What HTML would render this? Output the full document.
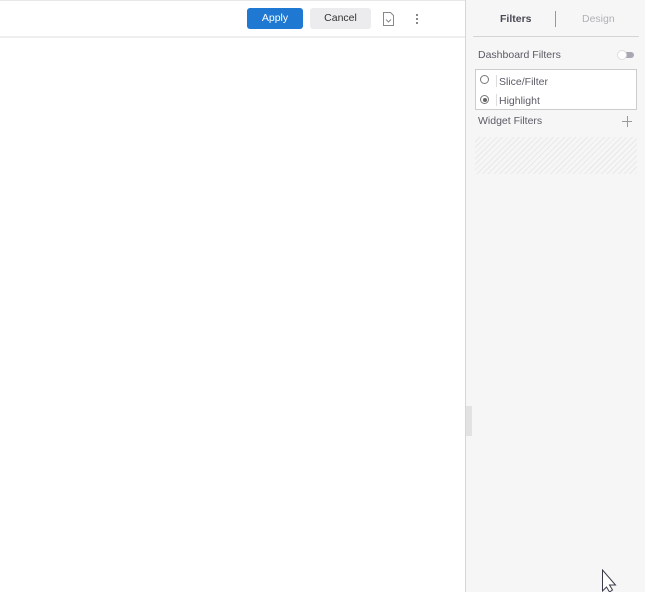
<!DOCTYPE html>
<html><head><style>
*{margin:0;padding:0;box-sizing:border-box}
body{width:645px;height:592px;position:relative;overflow:hidden;background:#fff;font-family:"Liberation Sans",sans-serif;font-size:10px;color:#5b5b66}
.a{position:absolute}
.t{line-height:12px}
.hatch{background:repeating-linear-gradient(135deg,#f6f6f6 0 3px,#e9e9e9 3px 4px)}
</style></head><body>
<div class="a" style="left:0;top:0;width:465px;height:1px;background:#e8e8e8"></div>
<div class="a" style="left:0;top:36px;width:465px;height:2px;background:#efefef"></div>
<div class="a" style="left:247px;top:8px;width:56px;height:21px;background:#1f78d1;border-radius:3px;color:#fff;text-align:center;line-height:21px;font-size:10.5px">Apply</div>
<div class="a" style="left:310px;top:8px;width:61px;height:21px;background:#ececee;border-radius:3px;color:#333;text-align:center;line-height:21px;font-size:10.5px">Cancel</div>
<svg class="a" style="left:382px;top:11px" width="13" height="16" viewBox="0 0 13 16"><path d="M1.5 1.5h7l3 3v10h-10z" fill="none" stroke="#888" stroke-width="1"/><path d="M4 8.5l2.5 2.5 2.5-2.5" fill="none" stroke="#888"/></svg>
<div class="a" style="left:416px;top:14px;width:2px;height:2px;background:#888;box-shadow:0 4px #888,0 8px #888"></div>
<div class="a" style="left:465px;top:0;width:180px;height:592px;background:#f6f6f6;border-left:1px solid #d6d6d6"></div>
<div class="a t" style="left:500px;top:13px;color:#4a4a55;font-weight:bold;font-size:10.5px">Filters</div>
<div class="a" style="left:555px;top:11px;width:1px;height:16px;background:#999"></div>
<div class="a t" style="left:582px;top:13px;color:#b0b0b8;font-size:10.5px">Design</div>
<div class="a" style="left:473px;top:36px;width:166px;height:1px;background:#d4d4d4"></div>
<div class="a t" style="left:478px;top:49px;font-size:10.5px">Dashboard Filters</div>
<div class="a" style="left:618px;top:52px;width:16px;height:6px;border-radius:3px;background:#a8a8b4"></div>
<div class="a" style="left:617px;top:50px;width:10px;height:10px;border-radius:50%;background:#fff;border:1px solid #ddd"></div>
<div class="a" style="left:475px;top:69px;width:162px;height:41px;background:#fff;border:1px solid #ccc"></div>
<div class="a" style="left:480px;top:75px;width:9px;height:9px;border-radius:50%;border:1px solid #777;background:#fff"></div>
<div class="a" style="left:496px;top:75px;width:1px;height:12px;background:#ddd"></div>
<div class="a t" style="left:499px;top:76px;font-size:10.5px">Slice/Filter</div>
<div class="a" style="left:480px;top:95px;width:9px;height:9px;border-radius:50%;border:1px solid #777;background:#fff"></div>
<div class="a" style="left:482.5px;top:97.5px;width:4px;height:4px;border-radius:50%;background:#666"></div>
<div class="a" style="left:496px;top:94px;width:1px;height:12px;background:#ddd"></div>
<div class="a t" style="left:499px;top:95px;font-size:10.5px">Highlight</div>
<div class="a t" style="left:478px;top:115px;font-size:10.5px">Widget Filters</div>
<div class="a" style="left:622px;top:121px;width:10px;height:1px;background:#999"></div>
<div class="a" style="left:626.5px;top:116px;width:1px;height:11px;background:#999"></div>
<div class="a hatch" style="left:475px;top:137px;width:162px;height:37px"></div>
<div class="a" style="left:466px;top:406px;width:6px;height:30px;background:#e2e2e2"></div>
<svg class="a" style="left:601px;top:569px" width="20" height="23" viewBox="0 0 20 23"><path d="M1.5 1v21l4-4 3 5 3-2-3-5h6z" fill="#fff" stroke="#3a3a4a" stroke-width="1"/></svg>
</body></html>
